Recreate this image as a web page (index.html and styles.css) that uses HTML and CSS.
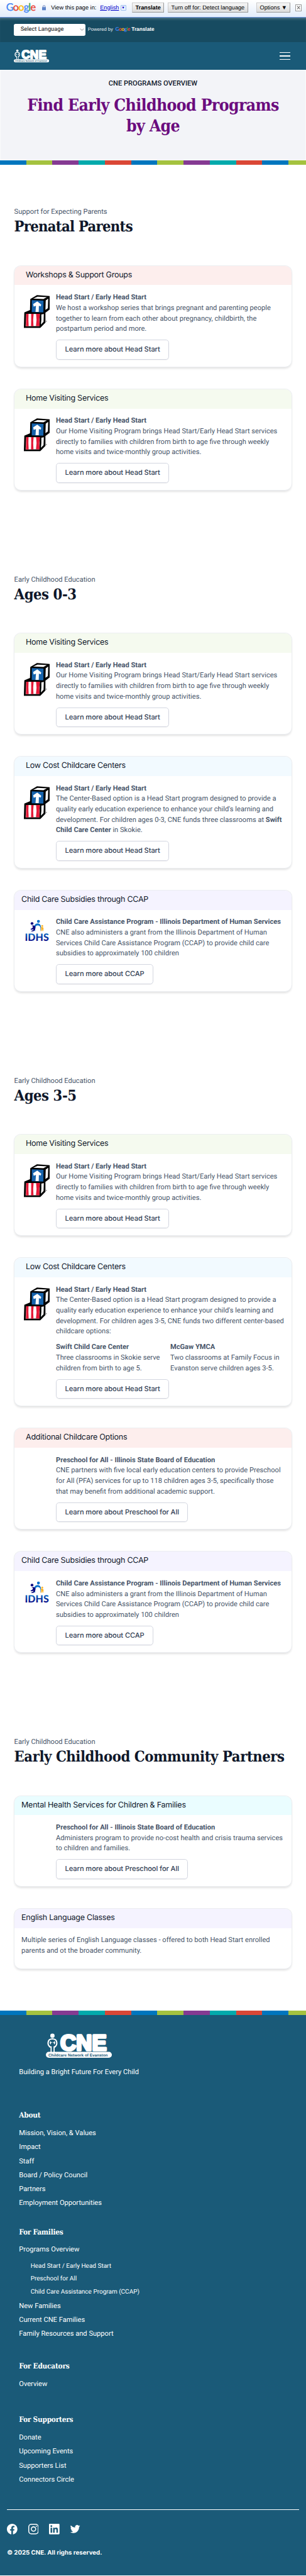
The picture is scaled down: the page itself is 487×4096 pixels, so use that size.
FILE: index.html
```html
<!DOCTYPE html>
<html lang="en">
<head>
<meta charset="utf-8">
<title>CNE Programs Overview</title>
<link rel="stylesheet" href="styles.css">
</head>
<body>
<svg class="defs" aria-hidden="true">
  <defs>
    <linearGradient id="idhs-fill" x1="0" y1="0" x2="0" y2="1">
      <stop offset="0.2" stop-color="#0a6cc4"/>
      <stop offset="0.85" stop-color="#060a86"/>
    </linearGradient>
  </defs>
  <symbol id="blocks" viewBox="0 0 180 228">
    <path d="M44 28 90 1l90 7-2 92-30 22v68l-36 37L0 226l3-106 39-16z" fill="#000"/>
    <path d="M54 36l81 3-1 81-80-2z" fill="#1663ac"/>
    <path d="M64 62l28-18 27 22-3 12-13-4-1 42H80l3-42-16 6z" fill="#fff"/>
    <path d="M64 25l30-13 64 3-24 13z" fill="#fff"/>
    <path d="M150 38l17-13-2 66-17 11z" fill="#fff"/>
    <path d="M16 129l93 1-2 84-95 1z" fill="#fff"/>
    <path d="M16 129h16l-1 40 2 46H14zM50 129h17l-3 40 2 46H49l1-44zM84 129h26l-4 42 2 43H83l4-44z" fill="#e51937"/>
    <path d="M120 134l17-4-2 54-18 19 3-34z" fill="#fff"/>
    <circle cx="154" cy="180" r="4" fill="#999"/>
  </symbol>
  <symbol id="idhs" viewBox="27 30 180 160">
    <circle cx="127" cy="52" r="10" fill="#0a70cc"/>
    <circle cx="83" cy="66" r="9.500" fill="#0a0a80"/>
    <circle cx="153" cy="83" r="6.500" fill="#fbb42a"/>
    <path d="M105 121c-3-30 3-41 18-41s22 12 16 41c8-14 12-55-18-55-28 0-29 43-16 55z" fill="#0a70cc"/>
    <path d="M76 82c20-7 34 0 30 18-3 16-16 25-31 18 14-1 18-8 17-13-8 6-17 4-20-2 10 0 18-8 17-17-5-3-9-3-13-4z" fill="#0a0a80"/>
    <path d="M142 94c8-6 20-4 20 6 0 8-2 12-2 19h-5l-2-14-5 14h-6c2-6 4-12 4-18z" fill="#fbb42a"/>
    <text x="33" y="184" class="idhs-text" textLength="166" fill="url(#idhs-fill)">IDHS</text>
  </symbol>
  <symbol id="cne" viewBox="0 0 151 56">
    <circle cx="15" cy="5.800" r="5" fill="#fff"/>
    <path d="M11 32C2 27 3 13 15 13s13 14 4 19" fill="none" stroke="#fff" stroke-width="3"/>
    <path d="M12 30v13M18.800 30v13" stroke="#fff" stroke-width="2.600"/>
    <path d="M10 18c-2 4-1 6 1 8l1-4c2-1 4-1 6 0l1 4c3-3 3-5 1-8l-3 3h-4z" fill="#fff"/>
    <text x="33" y="38.500" class="cne-text" textLength="106">CNE</text>
    <rect y="42.500" width="151" height="13.500" rx="6.700" fill="#fff"/>
    <text x="5.700" y="52.500" class="cne-sub" textLength="136">Childcare Network of Evanston</text>
  </symbol>
</svg>

<div class="gt-bar">
  <span class="g-logo"><i class="gb">G</i><i class="gr">o</i><i class="gy">o</i><i class="gb">g</i><i class="gg">l</i><i class="gr">e</i></span>
  <svg class="lock" viewBox="0 0 9 12"><path d="M2 5.500V3.500a2.500 2.500 0 0 1 5 0v2" fill="none" stroke="#7d93c4" stroke-width="1.500"/><rect y="4.500" width="9" height="7.500" rx=".8" fill="#5c83c9"/></svg>
  <span class="gt-label">View this page in:</span>
  <a class="gt-link">English</a><span class="gt-drop">▼</span>
  <span class="gt-btn gt-strong">Translate</span>
  <span class="gt-btn gt-off">Turn off for: Detect language</span>
  <span class="gt-btn gt-opt">Options ▼</span>
  <span class="gt-close"><svg viewBox="0 0 10 10"><path d="M1.500 1l7 8M8.500 1l-7 8" stroke="#777" stroke-width="1.800"/></svg></span>
</div>

<div class="topbar">
  <div class="select">Select Language
    <svg viewBox="0 0 10 6"><path d="M1 .8l4 4 4-4" fill="none" stroke="#666" stroke-width="1.100"/></svg>
  </div>
  <span class="powered">Powered by</span>
  <span class="g-small"><i class="gb">G</i><i class="gr">o</i><i class="gy">o</i><i class="gb">g</i><i class="gg">l</i><i class="gr">e</i></span>
  <b class="translate">Translate</b>
</div>

<header class="nav">
  <svg class="nav-logo"><use href="#cne"/></svg>
  <div class="burger"><span></span><span></span><span></span></div>
</header>

<div class="hero">
  <p class="hero-cap">CNE PROGRAMS OVERVIEW</p>
  <h1>Find Early Childhood Programs<br>by Age</h1>
</div>
<div class="stripe"></div>

<main>
  <section>
    <p class="eyebrow">Support for Expecting Parents</p>
    <h2 class="tight">Prenatal Parents</h2>
    <div class="cards">
      <article class="card">
        <h3 class="red">Workshops &amp; Support Groups</h3>
        <div class="body"><svg class="icon"><use href="#blocks"/></svg>
          <div class="text"><p><b>Head Start / Early Head Start</b></p>
          <p>We host a workshop series that brings pregnant and parenting people together to learn from each other about pregnancy, childbirth, the postpartum period and more.</p>
          <a class="btn">Learn more about Head Start</a></div></div>
      </article>
      <article class="card">
        <h3 class="green">Home Visiting Services</h3>
        <div class="body"><svg class="icon"><use href="#blocks"/></svg>
          <div class="text"><p><b>Head Start / Early Head Start</b></p>
          <p>Our Home Visiting Program brings Head Start/Early Head Start services directly to families with children from birth to age five through weekly home visits and twice-monthly group activities.</p>
          <a class="btn">Learn more about Head Start</a></div></div>
      </article>
    </div>
  </section>

  <section>
    <p class="eyebrow">Early Childhood Education</p>
    <h2>Ages 0-3</h2>
    <div class="cards">
      <article class="card">
        <h3 class="green">Home Visiting Services</h3>
        <div class="body"><svg class="icon"><use href="#blocks"/></svg>
          <div class="text"><p><b>Head Start / Early Head Start</b></p>
          <p>Our Home Visiting Program brings Head Start/Early Head Start services directly to families with children from birth to age five through weekly home visits and twice-monthly group activities.</p>
          <a class="btn">Learn more about Head Start</a></div></div>
      </article>
      <article class="card">
        <h3 class="blue">Low Cost Childcare Centers</h3>
        <div class="body"><svg class="icon"><use href="#blocks"/></svg>
          <div class="text"><p><b>Head Start / Early Head Start</b></p>
          <p>The Center-Based option is a Head Start program designed to provide a quality early education experience to enhance your child's learning and development. For children ages 0-3, CNE funds three classrooms at <b>Swift Child Care Center</b> in Skokie.</p>
          <a class="btn">Learn more about Head Start</a></div></div>
      </article>
      <article class="card">
        <h3 class="violet near">Child Care Subsidies through CCAP</h3>
        <div class="body"><svg class="icon idhs"><use href="#idhs"/></svg>
          <div class="text"><p><b>Child Care Assistance Program - Illinois Department of Human Services</b></p>
          <p>CNE also administers a grant from the Illinois Department of Human Services Child Care Assistance Program (CCAP) to provide child care subsidies to approximately 100 children</p>
          <a class="btn">Learn more about CCAP</a></div></div>
      </article>
    </div>
  </section>

  <section>
    <p class="eyebrow">Early Childhood Education</p>
    <h2>Ages 3-5</h2>
    <div class="cards">
      <article class="card">
        <h3 class="green">Home Visiting Services</h3>
        <div class="body"><svg class="icon"><use href="#blocks"/></svg>
          <div class="text"><p><b>Head Start / Early Head Start</b></p>
          <p>Our Home Visiting Program brings Head Start/Early Head Start services directly to families with children from birth to age five through weekly home visits and twice-monthly group activities.</p>
          <a class="btn">Learn more about Head Start</a></div></div>
      </article>
      <article class="card">
        <h3 class="blue">Low Cost Childcare Centers</h3>
        <div class="body"><svg class="icon"><use href="#blocks"/></svg>
          <div class="text"><p><b>Head Start / Early Head Start</b></p>
          <p>The Center-Based option is a Head Start program designed to provide a quality early education experience to enhance your child's learning and development. For children ages 3-5, CNE funds two different center-based childcare options:</p>
          <div class="cols">
            <div><p><b>Swift Child Care Center</b></p><p>Three classrooms in Skokie serve children from birth to age 5.</p></div>
            <div><p><b>McGaw YMCA</b></p><p>Two classrooms at Family Focus in Evanston serve children ages 3-5.</p></div>
          </div>
          <a class="btn">Learn more about Head Start</a></div></div>
      </article>
      <article class="card">
        <h3 class="red">Additional Childcare Options</h3>
        <div class="body"><span class="icon"></span>
          <div class="text"><p><b>Preschool for All - Illinois State Board of Education</b></p>
          <p>CNE partners with five local early education centers to provide Preschool for All (PFA) services for up to 118 children ages 3-5, specifically those that may benefit from additional academic support.</p>
          <a class="btn">Learn more about Preschool for All</a></div></div>
      </article>
      <article class="card">
        <h3 class="violet near">Child Care Subsidies through CCAP</h3>
        <div class="body"><svg class="icon idhs"><use href="#idhs"/></svg>
          <div class="text"><p><b>Child Care Assistance Program - Illinois Department of Human Services</b></p>
          <p>CNE also administers a grant from the Illinois Department of Human Services Child Care Assistance Program (CCAP) to provide child care subsidies to approximately 100 children</p>
          <a class="btn">Learn more about CCAP</a></div></div>
      </article>
    </div>
  </section>

  <section>
    <p class="eyebrow">Early Childhood Education</p>
    <h2>Early Childhood Community Partners</h2>
    <div class="cards">
      <article class="card">
        <h3 class="cyan near">Mental Health Services for Children &amp; Families</h3>
        <div class="body"><span class="icon"></span>
          <div class="text"><p><b>Preschool for All - Illinois State Board of Education</b></p>
          <p>Administers program to provide no-cost health and crisis trauma services to children and families.</p>
          <a class="btn">Learn more about Preschool for All</a></div></div>
      </article>
      <article class="card">
        <h3 class="violet near">English Language Classes</h3>
        <div class="body plain"><p>Multiple series of English Language classes - offered to both Head Start enrolled parents and ot the broader community.</p></div>
      </article>
    </div>
  </section>
</main>

<div class="stripe"></div>
<footer>
  <svg class="foot-logo"><use href="#cne"/></svg>
  <p class="tagline">Building a Bright Future For Every Child</p>
  <div class="group about">
    <h4>About</h4>
    <ul><li>Mission, Vision, &amp; Values</li><li>Impact</li><li>Staff</li><li>Board / Policy Council</li><li>Partners</li><li>Employment Opportunities</li></ul>
  </div>
  <div class="group families">
    <h4>For Families</h4>
    <ul><li>Programs Overview</li>
      <li class="nest"><ul><li>Head Start / Early Head Start</li><li>Preschool for All</li><li>Child Care Assistance Program (CCAP)</li></ul></li>
      <li>New Families</li><li>Current CNE Families</li><li>Family Resources and Support</li></ul>
  </div>
  <div class="group educators">
    <h4>For Educators</h4>
    <ul><li>Overview</li></ul>
  </div>
  <div class="group supporters">
    <h4>For Supporters</h4>
    <ul><li>Donate</li><li>Upcoming Events</li><li>Supporters List</li><li>Connectors Circle</li></ul>
  </div>
  <div class="bottom">
    <div class="social">
      <svg viewBox="0 0 24 24"><path d="M24 12.073C24 5.400 18.627 0 12 0S0 5.400 0 12.073c0 6.026 4.388 11.020 10.125 11.927v-8.437H7.078v-3.490h3.047V9.413c0-3.026 1.792-4.697 4.533-4.697 1.312 0 2.686.236 2.686.236v2.971H15.830c-1.491 0-1.956.93-1.956 1.886v2.264h3.328l-.532 3.490h-2.796V24C19.612 23.093 24 18.099 24 12.073z"/></svg>
      <svg viewBox="0 0 24 24" class="line"><rect x="1.100" y="1.100" width="21.800" height="21.800" rx="6"/><circle cx="12" cy="12" r="5"/><circle cx="18.400" cy="5.600" r="1.400" class="dot"/></svg>
      <svg viewBox="0 0 24 24"><path fill-rule="evenodd" d="M22.225 0H1.771C.792 0 0 .774 0 1.729v20.542C0 23.227.792 24 1.771 24h20.451C23.200 24 24 23.227 24 22.271V1.729C24 .774 23.200 0 22.222 0zM3.560 9h3.560v11.450H3.560zM5.340 3.300a2.060 2.060 0 1 1 0 4.130 2.060 2.060 0 0 1 0-4.130zM9.350 9h3.410v1.560h.05c.48-.9 1.640-1.850 3.370-1.850 3.600 0 4.270 2.370 4.270 5.460v6.280h-3.560v-5.570c0-1.330-.03-3.040-1.850-3.040-1.850 0-2.140 1.450-2.140 2.940v5.670H9.350z"/></svg>
      <svg viewBox="0 0 24 24"><path d="M23.643 4.937c-.835.370-1.732.620-2.675.733a4.670 4.670 0 0 0 2.048-2.578 9.300 9.300 0 0 1-2.958 1.130 4.660 4.660 0 0 0-7.938 4.250 13.229 13.229 0 0 1-9.602-4.868c-.4.690-.630 1.490-.630 2.342A4.660 4.660 0 0 0 3.960 9.824a4.647 4.647 0 0 1-2.110-.583v.060a4.660 4.660 0 0 0 3.737 4.568 4.692 4.692 0 0 1-2.104.080 4.661 4.661 0 0 0 4.352 3.234 9.348 9.348 0 0 1-5.786 1.995 9.500 9.500 0 0 1-1.112-.065 13.175 13.175 0 0 0 7.140 2.093c8.570 0 13.255-7.098 13.255-13.254 0-.200-.005-.402-.014-.602a9.470 9.470 0 0 0 2.323-2.410z"/></svg>
    </div>
    <p class="copy">© 2025 CNE. All righs reserved.</p>
  </div>
</footer>
</body>
</html>
```
FILE: styles.css
```css
* { box-sizing: border-box; margin: 0; padding: 0; }

html { font-size: 6.9555px; text-rendering: geometricPrecision; }

body {
  font: 1.6rem/2.4rem Roboto, "Liberation Sans", sans-serif;
  color: #475569;
  background: #fff;
  overflow-x: hidden;
}

ul { list-style: none; }
i { font-style: normal; }
svg { display: block; flex: none; }
.defs { position: absolute; width: 0; height: 0; }

.idhs-text { font: 900 69px Lato, sans-serif; }
.cne-text { font: 700 50px "Liberation Sans", Arial, sans-serif; fill: #fff; stroke: #fff; stroke-width: 5px; stroke-linejoin: round; }
.cne-sub { font: 700 9.2px "Liberation Sans", Arial, sans-serif; fill: #1a5a78; }

.gb { color: #4285f4; }
.gr { color: #ea4335; }
.gy { color: #fbbc05; }
.gg { color: #34a853; }

/* translate bar */
.gt-bar {
  display: flex;
  align-items: center;
  height: 4rem;
  padding: 0 1rem 0.3rem 1.4rem;
  font: 1.325rem/1.6rem "Liberation Sans", Arial, sans-serif;
  color: #000;
  white-space: nowrap;
  background: linear-gradient(#fff, #e3edfb);
  border-bottom: 1px solid #6b90da;
}
.g-logo { width: 6.8rem; font: 2.35rem/2.4rem Lato, sans-serif; letter-spacing: -0.115rem; -webkit-text-stroke: 0.3px; }
.lock { width: 0.9rem; height: 1.2rem; margin-left: 1.4rem; }
.gt-label { width: 10.35rem; margin-left: 1.2rem; }
.gt-link { width: 4.4rem; margin-left: 0.85rem; color: #0000cc; text-decoration: underline; }
.gt-drop {
  width: 1.3rem; height: 1.4rem; margin-left: 0.25rem;
  font-size: 0.8rem; line-height: 1.25rem; text-align: center;
  color: #00c; background: #e8f0fd; border: 1px solid #9fc0ee; border-radius: 1px;
}
.gt-btn {
  height: 2.3rem;
  line-height: 2.1rem;
  text-align: center;
  background: linear-gradient(#f6f6f6, #dcdcdc);
  border: 1px solid #ccc;
  border-right-color: #999;
  border-bottom-color: #999;
}
.gt-strong { width: 7.3rem; margin-left: 1.4rem; font-weight: 700; }
.gt-off { width: 18.3rem; margin-left: 0.9rem; }
.gt-opt { width: 7.7rem; margin-left: 2rem; }
.gt-close { width: 1.5rem; height: 1.5rem; margin-left: 1.1rem; padding: 0.15rem; background: #fff; border: 1px solid #999; }
.gt-close svg { width: 100%; height: 100%; }

/* language row */
.topbar {
  display: flex;
  align-items: center;
  height: 5.6rem;
  padding: 0 3.2rem 0.4rem;
  color: #fff;
  background: #174b61;
  box-shadow: inset 0 0.6rem 0.6rem -0.4rem rgba(255, 255, 255, 0.3);
  padding-top: 0.4rem;
}
.select {
  display: flex;
  align-items: center;
  justify-content: space-between;
  width: 16.4rem;
  height: 2.8rem;
  padding: 0 0.35rem 0 1.5rem;
  font-size: 1.33rem;
  font-weight: 500;
  color: #444;
  background: #fff;
  border-radius: 0.4rem;
}
.select svg { width: 1rem; height: 0.6rem; }
.powered { margin-left: 0.5rem; width: 5.8rem; font: 1.09rem/2rem "Liberation Sans", Arial, sans-serif; color: #e8eef2; white-space: nowrap; }
.g-small { margin-left: 0.5rem; width: 3.3rem; font: 700 1.2rem/2rem Lato, sans-serif; letter-spacing: -0.08rem; }
.translate { margin-left: 0.4rem; font: 700 1.19rem/2rem "Liberation Sans", Arial, sans-serif; }

.nav {
  display: flex;
  justify-content: space-between;
  height: 6.4rem;
  padding: 1.65rem 3.6rem 0 3.2rem;
  background: #1a5a78;
}
.nav-logo { width: 8.1rem; height: 3.1rem; }
.burger { display: flex; flex-direction: column; gap: 0.6rem; width: 2.4rem; padding-top: 0.65rem; }
.burger span { height: 0.2rem; background: #fff; }

.hero {
  height: 20.7rem;
  padding-top: 1.85rem;
  text-align: center;
  background: #f3f4f8;
  border: 1px solid #fafbfc;
}
.hero-cap { font-weight: 500; color: #0f172a; }
h1, h2, h4 { font-family: "DejaVu Serif Condensed", "DejaVu Serif", serif; font-stretch: condensed; font-weight: 700; }
h1 { margin-top: 1.3rem; font-size: 3.8rem; line-height: 4.8rem; letter-spacing: -0.093rem; color: #6b0c7e; }

.stripe {
  height: 1rem;
  background: repeating-linear-gradient(90deg, #0076be 0 6rem, #a4c23f 6rem 12rem, #853a92 12rem 18rem, #02aaac 18rem 24rem, #da4736 24rem 30rem);
}

main {
  display: flex;
  flex-direction: column;
  gap: 19.37rem;
  padding: 9.65rem 3.25rem 9.7rem;
}
h2 { margin-top: 0.2rem; font-size: 3.4rem; line-height: 4rem; letter-spacing: -0.065rem; color: #0f172a; white-space: nowrap; }
h2.tight { letter-spacing: -0.106rem; }
.cards { display: flex; flex-direction: column; gap: 5.2rem; margin-top: 6.85rem; }

.card {
  overflow: hidden;
  background: #fff;
  border-radius: 1.5rem;
  box-shadow: 0 0 0 1px #eceef1, 0 0.3rem 0.5rem rgba(0, 0, 0, 0.12);
}
h3 {
  height: 4.4rem;
  padding-left: 2.65rem;
  font: 400 1.8rem/4.4rem Inter, Roboto, sans-serif;
  letter-spacing: -0.035rem;
  color: #0f172a;
}
h3.near { padding-left: 1.65rem; }
.red { background: #fdeeed; }
.green { background: #f5faef; }
.blue { background: #f2faff; }
.violet { background: #f5f3ff; }
.cyan { background: #eafdff; }

.body { display: flex; padding: 1.7rem 1.65rem 1.6rem 2.15rem; }
.body.plain { padding: 1.7rem 1.65rem 2.7rem; }
.icon { flex: none; width: 6rem; height: 7.6rem; margin: 0.6rem 1.4rem 0 0; }
.icon.idhs { height: 5.33rem; margin-top: 0.3rem; }
.text { flex: 1; }
.cols { display: grid; grid-template-columns: 1fr 1fr; margin-top: 1.2rem; }
.btn {
  display: block;
  width: fit-content;
  height: 4.5rem;
  margin-top: 1.2rem;
  padding: 0 1.95rem;
  font: 500 1.6rem/4.3rem Inter, Roboto, sans-serif;
  letter-spacing: -0.012rem;
  color: #334155;
  border: 1px solid #d3d6e0;
  border-radius: 0.7rem;
  box-shadow: 0 1px 1px rgba(0, 0, 0, 0.05);
}

footer { height: 128.1rem; padding-top: 4.16rem; color: #fff; background: #1a5a78; }
.foot-logo { width: 15.1rem; height: 5.6rem; margin-left: 10.5rem; }
.tagline { margin: 2.25rem 0 0 4.35rem; }
.group { padding-left: 4.35rem; }
.group li { line-height: 3.2rem; }
h4 { font-size: 1.7rem; line-height: 2.4rem; letter-spacing: -0.035rem; }
.about { margin-top: 7.3rem; }
.about ul { margin-top: 1.35rem; }
.families { margin-top: 3.75rem; }
.families > ul { margin-top: 1.25rem; }
.group .nest { padding: 0.8rem 0 0.1rem 2.65rem; }
.nest li { font-size: 1.44rem; line-height: 2.94rem; }
.educators { margin-top: 4.5rem; }
.educators ul { margin-top: 1.3rem; }
.supporters { margin-top: 5.35rem; }
.supporters ul { margin-top: 1.35rem; }
.bottom { margin: 5.1rem 1.6rem 0; padding-top: 3.2rem; border-top: 1px solid #fff; }
.social { display: flex; gap: 2.4rem; }
.social svg { width: 2.4rem; height: 2.4rem; fill: #fff; }
.social .line { fill: none; stroke: #fff; stroke-width: 2.2; }
.social .dot { fill: #fff; stroke: none; }
.copy { margin-top: 3.25rem; font: 700 1.4rem/2.4rem Inter, Roboto, sans-serif; }
```
